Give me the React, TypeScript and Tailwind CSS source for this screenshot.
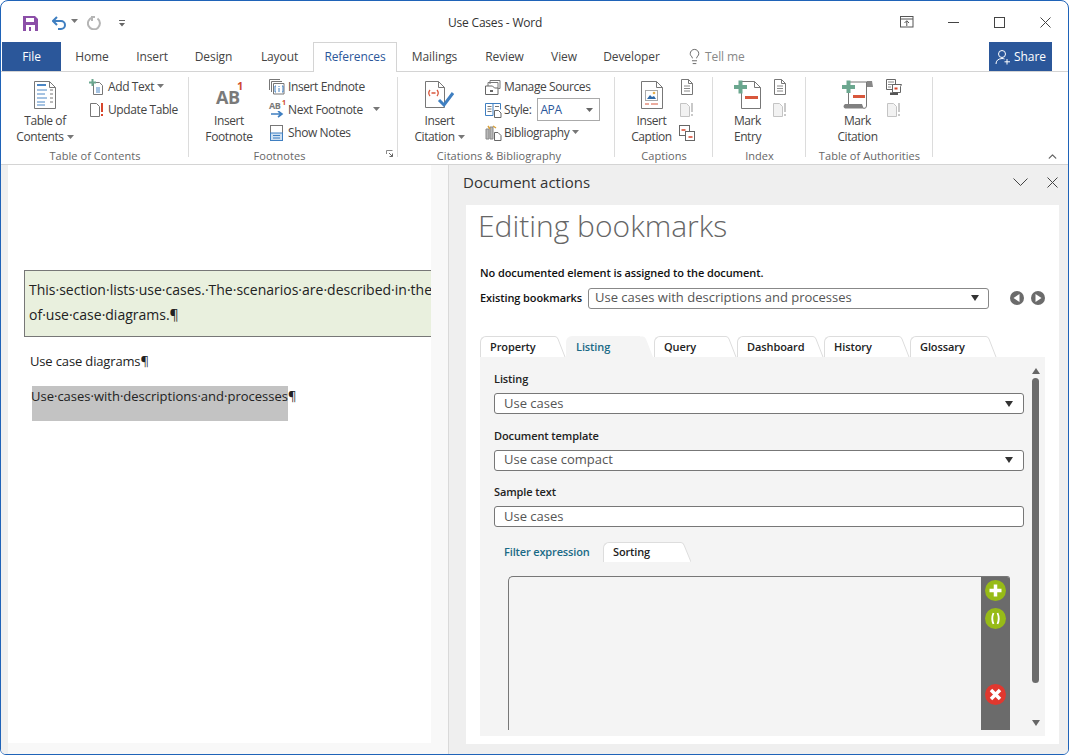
import React from 'react';
import { ChevronUp, Lightbulb } from 'lucide-react';

const Caret = () => (
  <svg width="7" height="4" viewBox="0 0 7 4" className="inline-block ml-[3px] mb-[2px]">
    <path d="M0 0h7L3.5 4z" fill="#777" />
  </svg>
);

const tabs = [
  { label: 'Home', w: 'w-[62px]' },
  { label: 'Insert', w: 'w-[58px]' },
  { label: 'Design', w: 'w-[65px]' },
  { label: 'Layout', w: 'w-[67px]' },
];
const tabsAfter = [
  { label: 'Mailings', w: 'w-[75px]' },
  { label: 'Review', w: 'w-[65px]' },
  { label: 'View', w: 'w-[54px]' },
  { label: 'Developer', w: 'w-[81px]' },
];

// Document with a folded corner, shared by most ribbon icons
const DocIcon = ({ size = 16, color = '#777', children }: { size?: number; color?: string; children?: React.ReactNode }) => (
  <svg width={size} height={size} viewBox="0 0 16 16" fill="none">
    <path d="M2.5 .5h7l4 4v11h-11z" fill="#fff" stroke={color} />
    <path d="M9.5 .5v4h4" stroke={color} />
    {children}
  </svg>
);

const Lines = () => (
  <g stroke="#888">
    <path d="M5 7h6M5 9.500h6M5 12h6" />
  </g>
);

const DisabledMark = () => (
  <svg width="16" height="16" viewBox="0 0 16 16" fill="none">
    <path d="M1.500 1.500h6l3 3v10h-9z" fill="#f2f2f2" stroke="#c4c4c4" />
    <path d="M13 1v9M13 12v2" stroke="#c9c9c9" strokeWidth="2" />
  </svg>
);

const TocIcon = () => (
  <svg width="24" height="30" viewBox="0 0 24 30" fill="none">
    <path d="M1.500 1.500h15l6 6v21h-21z" fill="#fff" stroke="#777" />
    <path d="M16.500 1.500v6h6" stroke="#777" />
    <path d="M4 5h9" stroke="#4a86c5" strokeWidth="2" />
    <path d="M4 10h10M4 14h8M4 18h10M4 22h8M4 25h8" stroke="#4a86c5" />
    <path d="M17 10h3M17 14h3M17 18h3M17 22h3" stroke="#777" />
  </svg>
);

const FootnoteIcon = () => (
  <div className="relative ml-[8px] h-[32px] w-[36px] font-['Open_Sans',sans-serif] font-bold">
    <span className="absolute left-[1px] top-[7px] text-[18px] leading-[22px] tracking-[-0.5px] text-[#7a7a7a]">AB</span>
    <span className="absolute left-[22px] top-0 text-[11px] leading-[14px] text-[#d0492f]">1</span>
  </div>
);

const CitationIcon = () => (
  <svg width="32" height="30" viewBox="0 0 32 30" fill="none" className="ml-[1px]">
    <path d="M1.500 1.500h13l6 6v20h-19z" fill="#fff" stroke="#777" />
    <path d="M14.500 1.500v6h6" stroke="#777" />
    <path d="M6 10q-2.500 3 0 6M13 10q2.500 3 0 6" stroke="#d8573c" strokeWidth="1.300" />
    <path d="M7.500 13h4" stroke="#d8573c" strokeWidth="1.500" />
    <path d="M15 20l5 5 9-12" stroke="#3f7fc1" strokeWidth="3" />
  </svg>
);

const CaptionIcon = () => (
  <svg width="24" height="30" viewBox="0 0 24 30" fill="none">
    <path d="M1.500 1.500h15l6 6v21h-21z" fill="#fff" stroke="#777" />
    <path d="M16.500 1.500v6h6" stroke="#777" />
    <rect x="5.500" y="10.500" width="12" height="10" fill="#fff" stroke="#aaa" />
    <path d="M7 19l3-4 2 2 2-1 2 3z" fill="#2f6aa8" />
    <circle cx="14" cy="13" r="1.300" fill="#e8b04a" />
    <path d="M5 24h4M11 24h7" stroke="#d8573c" />
  </svg>
);

const MarkEntryIcon = () => (
  <svg width="28" height="30" viewBox="0 0 28 30" fill="none">
    <path d="M7.500 1.500h13l6 6v21h-19z" fill="#fff" stroke="#777" />
    <path d="M20.500 1.500v6h6" stroke="#777" />
    <path d="M4.500 .5h4v4.500h4.500v4h-4.500v4.500h-4v-4.500H0v-4h4.500z" fill="#6ba78f" />
    <path d="M11 17.500h13" stroke="#d8573c" strokeWidth="3" />
  </svg>
);

const MarkCitationIcon = () => (
  <svg width="32" height="30" viewBox="0 0 32 30" fill="none">
    <path d="M6.500 26V2h22v4" fill="#fff" stroke="#777" />
    <path d="M24.500 2v24q0 2.500-3 2.500" fill="none" stroke="#777" />
    <path d="M25 1h5l1 6h-6z" fill="#888" />
    <path d="M3 24h17q.5 2 2 4.500H3q-3-2 0-4.500z" fill="#808080" />
    <path d="M11 16.500h12" stroke="#d8573c" strokeWidth="3" />
    <path d="M4.500 .5h4v4.500h4.500v4h-4.500v4h-4v-4H0v-4h4.500z" fill="#6ba78f" />
  </svg>
);

const AddTextIcon = () => (
  <svg width="16" height="16" viewBox="0 0 16 16" fill="none">
    <path d="M4.500 3.500h6l3 3v9h-9z" fill="#fff" stroke="#777" />
    <path d="M7 9h4M7 11h4M7 13h4" stroke="#4a86c5" />
    <path d="M2.500 0h2v2.500H7v2H4.500V7h-2V4.500H0v-2h2.500z" fill="#6ba78f" />
  </svg>
);

const UpdateIcon = () => (
  <svg width="16" height="16" viewBox="0 0 16 16" fill="none">
    <path d="M1.500 1.500h6l3 3v10h-9z" fill="#fff" stroke="#777" />
    <path d="M13 1v9M13 12v2" stroke="#d8452b" strokeWidth="2" />
  </svg>
);

const EndnoteIcon = () => (
  <svg width="16" height="16" viewBox="0 0 16 16" fill="none">
    <path d="M.5 11V.5H11M2.500 13V2.500H13M4.500 15V4.500H15V15z" stroke="#777" fill="#fff" />
    <path d="M7 7H6v6h1M13 7h1v6h-1" stroke="#3f7fc1" />
    <path d="M10 7v1M10 9v4" stroke="#3f7fc1" />
  </svg>
);

const NextFootnoteIcon = () => (
  <div className="relative h-[16px] w-[16px] font-['Open_Sans',sans-serif] font-bold">
    <span className="absolute left-0 top-[-2px] text-[9px] leading-[12px] text-[#7a7a7a]">AB</span>
    <span className="absolute left-[13px] top-[-4px] text-[7px] leading-[9px] text-[#d0492f]">1</span>
    <svg width="16" height="8" viewBox="0 0 16 8" className="absolute left-[2px] top-[9px]" fill="none">
      <path d="M0 3h10M7 0l4 3-4 3" stroke="#3f7fc1" strokeWidth="1.600" />
    </svg>
  </div>
);

const ShowNotesIcon = () => (
  <svg width="14" height="16" viewBox="0 0 14 16" fill="none" className="ml-[1px]">
    <rect x=".5" y=".5" width="12" height="15" fill="#fff" stroke="#777" />
    <rect x=".5" y="8" width="12" height="7.500" fill="#cfe0f1" stroke="#3f7fc1" />
    <path d="M3 10.500h7M3 13h7" stroke="#3f7fc1" />
  </svg>
);

const SourcesIcon = () => (
  <svg width="16" height="16" viewBox="0 0 16 16" fill="none">
    <path d="M5 5V1.500h10v8h-1.500M3 7V3.500h10V10" stroke="#777" />
    <path d="M.5 15.500V7h7l2 2h3.500v6.500z" fill="#fff" stroke="#666" />
    <path d="M5 12h3" stroke="#666" strokeWidth="2" />
  </svg>
);

const StyleIcon = () => (
  <svg width="17" height="16" viewBox="0 0 17 16" fill="none">
    <path d="M.5 1.500h7.500v12H.5zM8 1.500h7.500v6" stroke="#3f7fc1" fill="#fff" />
    <path d="M2.500 4.500h4M2.500 7h4M2.500 9.500h4M10 4.500h4" stroke="#777" />
    <path d="M9.500 8.500h4l2.500 2.500v4.500H9.500z" fill="#fff" stroke="#666" />
  </svg>
);

const BibIcon = () => (
  <svg width="17" height="16" viewBox="0 0 17 16" fill="none">
    <path d="M1 4h3v10H1zM5 2h3v12H5z" fill="#b9b9b9" stroke="#888" />
    <path d="M3 1l2 3M8 1l3 2" stroke="#d9a13b" strokeWidth="1.500" />
    <path d="M9.500 7.500h3.500l3 3v5H9.500z" fill="#fff" stroke="#666" />
  </svg>
);

const CrossRefIcon = () => (
  <svg width="16" height="16" viewBox="0 0 16 16" fill="none">
    <rect x=".5" y=".5" width="10" height="10" fill="#fff" stroke="#666" />
    <rect x="6.500" y="6.500" width="9" height="9" fill="#fff" stroke="#666" />
    <path d="M2.500 5h4" stroke="#d8452b" strokeWidth="1.600" />
    <path d="M9.500 12h4" stroke="#d8452b" strokeWidth="1.600" />
  </svg>
);

const AuthoritiesIcon = () => (
  <svg width="16" height="16" viewBox="0 0 16 16" fill="none">
    <path d="M.5.500h9v10h-9z" fill="#fff" stroke="#666" />
    <path d="M2 3h6M2 5.500h6M2 8h3" stroke="#888" />
    <path d="M6.500 5.500h9l-1 2v6h-8z" fill="#fff" stroke="#666" />
    <path d="M8.500 9.500h3" stroke="#d8452b" strokeWidth="2" />
    <path d="M4 13.500h8v2.500H4z" fill="#555" />
  </svg>
);

const RibbonSmall = ({ icon, label, caret }: { icon: React.ReactNode; label: string; caret?: boolean }) => (
  <div className="flex h-[23px] items-center whitespace-nowrap">
    <div className="flex w-[19px] shrink-0 items-center">{icon}</div>
    <span>{label}</span>
    {caret && <Caret />}
  </div>
);

const RibbonBig = ({ icon, lines, caret, w }: { icon: React.ReactNode; lines: string[]; caret?: boolean; w: string }) => (
  <div className={`flex flex-col items-center pt-[5px] ${w}`}>
    <div className="flex h-[35px] items-center">{icon}</div>
    <div className="mt-[1px] text-center leading-[16px] whitespace-nowrap">{lines[0]}</div>
    <div className="text-center leading-[16px] whitespace-nowrap">
      {lines[1]}
      {caret && <Caret />}
    </div>
  </div>
);

const RibbonGroup = ({ w, label, labelPad, children }: { w: string; label: string; labelPad?: string; children: React.ReactNode }) => (
  <div className={`relative flex h-[92px] shrink-0 flex-col ${w}`}>
    <div className="flex h-[77px]">{children}</div>
    <div className={`text-center text-[11px] leading-[14px] tracking-[0.05px] text-[#666] ${labelPad ?? ''}`}>{label}</div>
    <div className="absolute right-0 top-[5px] h-[80px] w-px bg-[#dcdcdc]" />
  </div>
);

const PanelTab = ({ label, active, w }: { label: string; active?: boolean; w: string }) => (
  <div className={`relative flex h-[21px] shrink-0 ${w}`}>
    <div
      className={`flex-1 rounded-tl-[6px] border-l border-t border-[#dddddd] pl-[9px] text-[11px] font-semibold leading-[20px] tracking-[-0.1px] ${
        active ? 'border-transparent bg-[#f4f4f4] text-[#1a6a86]' : 'bg-white text-[#222]'
      }`}
    >
      {label}
    </div>
    <svg width="14" height="21" viewBox="0 0 14 21" className="shrink-0" fill="none">
      <path d="M0 .5h3q2 0 3 2.500l7 18H0z" fill={active ? '#f4f4f4' : '#fff'} />
      {!active && <path d="M0 .5h3q2 0 3 2.500l7 18" stroke="#dddddd" />}
    </svg>
  </div>
);

const Field = ({ label, value, arrow }: { label: string; value: string; arrow?: boolean }) => (
  <div className="w-[530px]">
    <div className="h-[14px] text-[11px] font-semibold leading-[14px] tracking-[-0.1px] text-[#222]">{label}</div>
    <div className="mt-[7px] flex h-[21px] items-center justify-between rounded-[3px] border border-[#777] bg-white pl-[9px] pr-[10px] text-[13px] text-[#555]">
      <span>{value}</span>
      {arrow && (
        <svg width="8" height="6" viewBox="0 0 8 6">
          <path d="M0 0h8L4 6z" fill="#333" />
        </svg>
      )}
    </div>
  </div>
);

const RoundButton = ({ color, children }: { color: string; children: React.ReactNode }) => (
  <svg width="21" height="21" viewBox="0 0 21 21">
    <circle cx="10.500" cy="10.500" r="10.500" fill={color} />
    {children}
  </svg>
);

const NavArrow = ({ dir }: { dir: 'left' | 'right' }) => (
  <svg width="14" height="14" viewBox="0 0 14 14">
    <circle cx="7" cy="7" r="7" fill="#6b6b6b" />
    <path d={dir === 'left' ? 'M9.500 3v8L3.500 7z' : 'M4.500 3v8L10.500 7z'} fill="#fff" />
  </svg>
);

export default function App() {
  return (
    <div className="relative h-[755px] w-[1069px] overflow-hidden rounded-t-[8px] rounded-b-[6px] border border-[#1f63b8] bg-white font-['Open_Sans',sans-serif] text-[12px] text-[#444]">
      {/* Title bar */}
      <div className="relative flex h-[41px] items-center">
        <svg width="15" height="15" viewBox="0 0 15 15" className="ml-[22px] mt-[3px]">
          <path d="M0 0h12l3 3v12H0z" fill="#8c4fa8" />
          <rect x="3" y="2" width="8" height="4" fill="#fff" />
          <rect x="3" y="9" width="9" height="6" fill="#fff" />
          <rect x="6" y="11" width="2" height="4" fill="#8c4fa8" />
        </svg>
        <svg width="16" height="14" viewBox="0 0 16 14" className="ml-[14px] mt-[3px]" fill="none">
          <path d="M5 1L1 5l4 4" stroke="#3f7fc1" strokeWidth="2" />
          <path d="M1.500 5H9a4 4 0 0 1 0 8H6" stroke="#3f7fc1" strokeWidth="2" />
        </svg>
        <Caret />
        <svg width="14" height="14" viewBox="0 0 14 14" className="ml-[9px] mt-[3px]" fill="none">
          <path d="M8 1h-3v4" stroke="#b5b5b5" strokeWidth="2" />
          <path d="M5.500 1.500a6 6 0 1 0 5 1" stroke="#b5b5b5" strokeWidth="2" />
        </svg>
        <svg width="6" height="7" viewBox="0 0 6 7" className="ml-[18px] mt-[3px]">
          <path d="M0 0h6v1H0zM0 3h6L3 6.500z" fill="#666" />
        </svg>
        <div className="absolute left-[447px] top-[14px] text-[12px] leading-[16px] tracking-[-0.2px] text-[#333]">Use Cases - Word</div>
        <div className="absolute right-[17px] top-[15px] flex items-center">
          <svg width="14" height="12" viewBox="0 0 14 12" fill="none" className="mr-[34px]">
            <rect x=".5" y=".5" width="12.500" height="10.500" stroke="#555" />
            <path d="M.5 3h12.500" stroke="#555" />
            <path d="M6.800 10V5M4.500 7l2.300-2.300L9 7" stroke="#555" />
          </svg>
          <svg width="11" height="11" viewBox="0 0 11 11" fill="none" className="mr-[35px]">
            <path d="M0 5.500h11" stroke="#444" />
          </svg>
          <svg width="11" height="11" viewBox="0 0 11 11" fill="none" className="mr-[35px]">
            <rect x=".5" y=".5" width="10" height="10" stroke="#444" />
          </svg>
          <svg width="11" height="11" viewBox="0 0 11 11" fill="none">
            <path d="M.5.500l10 10M10.500.500l-10 10" stroke="#444" />
          </svg>
        </div>
      </div>

      {/* Tabs */}
      <div className="flex h-[30px] border-b border-[#d4d4d4] pl-px text-[12px] tracking-[-0.1px] text-[#444]">
        <div className="flex h-[29px] w-[59px] items-center justify-center bg-[#2b579a] text-white">File</div>
        {tabs.map((t) => (
          <div key={t.label} className={`flex h-[29px] items-center justify-center ${t.w}`}>
            {t.label}
          </div>
        ))}
        <div className="flex h-[30px] w-[84px] items-center justify-center border-x border-t border-[#d4d4d4] bg-white pb-px text-[#2b579a]">
          References
        </div>
        {tabsAfter.map((t) => (
          <div key={t.label} className={`flex h-[29px] items-center justify-center ${t.w}`}>
            {t.label}
          </div>
        ))}
        <div className="ml-[14px] flex h-[29px] items-center text-[#888]">
          <Lightbulb size={17} strokeWidth={1.100} className="mr-[2px] text-[#444]" />
          Tell me
        </div>
        <div className="ml-auto mr-[16px] flex h-[29px] w-[63px] items-center justify-center gap-[3px] bg-[#2b579a] text-white">
          <svg width="16" height="16" viewBox="0 0 16 16" fill="none">
            <circle cx="7" cy="5" r="3.500" stroke="#fff" />
            <path d="M1 15q0-5 6-5.500q1.500 0 2.500.5" stroke="#fff" />
            <path d="M12 10v5.500M9.500 12.800h5.500" stroke="#fff" />
          </svg>
          Share
        </div>
      </div>

      {/* Ribbon */}
      <div className="relative flex h-[93px] border-b border-[#d4d4d4] text-[12px] leading-[16px] tracking-[-0.4px]">
        <RibbonGroup w="w-[188px]" label="Table of Contents">
          <RibbonBig w="w-[88px]" icon={<TocIcon />} lines={['Table of', 'Contents']} caret />
          <div className="pt-[3px]">
            <RibbonSmall icon={<AddTextIcon />} label="Add Text" caret />
            <RibbonSmall icon={<UpdateIcon />} label="Update Table" />
          </div>
        </RibbonGroup>
        <RibbonGroup w="w-[209px]" label="Footnotes" labelPad="pr-[28px]">
          <RibbonBig w="w-[80px]" icon={<FootnoteIcon />} lines={['Insert', 'Footnote']} />
          <div className="pt-[3px]">
            <RibbonSmall icon={<EndnoteIcon />} label="Insert Endnote" />
            <div className="flex items-center">
              <RibbonSmall icon={<NextFootnoteIcon />} label="Next Footnote" />
              <span className="ml-[7px]"><Caret /></span>
            </div>
            <RibbonSmall icon={<ShowNotesIcon />} label="Show Notes" />
          </div>
          <svg width="7" height="7" viewBox="0 0 7 7" className="absolute right-[5px] top-[78px]" fill="none">
            <path d="M.5 4V.5H6.500" stroke="#888" />
            <path d="M3 3l3.500 3.500M3.500 6.500h3v-3" stroke="#666" />
          </svg>
        </RibbonGroup>
        <RibbonGroup w="w-[217px]" label="Citations & Bibliography" labelPad="pr-[15px]">
          <RibbonBig w="w-[83px] mr-[4px]" icon={<CitationIcon />} lines={['Insert', 'Citation']} caret />
          <div className="pt-[3px]">
            <RibbonSmall icon={<SourcesIcon />} label="Manage Sources" />
            <div className="flex items-center">
              <RibbonSmall icon={<StyleIcon />} label="Style:" />
              <div className="ml-[6px] flex h-[23px] w-[63px] items-center justify-between border border-[#aaa] pl-[2px] pr-[6px] text-[#2b579a]">
                APA
                <svg width="7" height="4" viewBox="0 0 7 4"><path d="M0 0h7L3.500 4z" fill="#666" /></svg>
              </div>
            </div>
            <RibbonSmall icon={<BibIcon />} label="Bibliography" caret />
          </div>
        </RibbonGroup>
        <RibbonGroup w="w-[98px]" label="Captions">
          <RibbonBig w="w-[55px] ml-[9px]" icon={<CaptionIcon />} lines={['Insert', 'Caption']} />
          <div className="pt-[3px]">
            <div className="flex h-[23px] items-center"><DocIcon><Lines /></DocIcon></div>
            <div className="flex h-[23px] items-center"><DisabledMark /></div>
            <div className="flex h-[23px] items-center"><CrossRefIcon /></div>
          </div>
        </RibbonGroup>
        <RibbonGroup w="w-[93px]" label="Index">
          <RibbonBig w="w-[49px] ml-[10px]" icon={<MarkEntryIcon />} lines={['Mark', 'Entry']} />
          <div className="pt-[3px]">
            <div className="flex h-[23px] items-center"><DocIcon><Lines /></DocIcon></div>
            <div className="flex h-[23px] items-center"><DisabledMark /></div>
          </div>
        </RibbonGroup>
        <RibbonGroup w="w-[127px]" label="Table of Authorities">
          <RibbonBig w="w-[57px] ml-[23px]" icon={<MarkCitationIcon />} lines={['Mark', 'Citation']} />
          <div className="pt-[3px]">
            <div className="flex h-[23px] items-center"><AuthoritiesIcon /></div>
            <div className="flex h-[23px] items-center"><DisabledMark /></div>
          </div>
        </RibbonGroup>
        <ChevronUp size={13} strokeWidth={2.500} className="absolute right-[9px] top-[78px] text-[#666]" />
      </div>

      {/* Body */}
      <div className="flex h-[589px]">
        {/* Document */}
        <div className="flex w-[448px] shrink-0 border-r border-[#d9d9d9] bg-[#f8f8f8]">
          <div className="w-[7px] shrink-0 bg-[#efefef]" />
          <div className="h-[578px] w-[423px] shrink-0 overflow-hidden bg-white pl-[16px] pt-[105px] font-['Open_Sans',sans-serif] text-[#222]">
            <div className="h-[67px] w-[450px] whitespace-nowrap border border-[#777] bg-[#e9f0de] pl-[4px] pt-[6px] text-[14px] leading-[25px]">
              <div>This·section·lists·use·cases.·The·scenarios·are·described·in·the</div>
              <div>of·use·case·diagrams.¶</div>
            </div>
            <div className="ml-[6px] mt-[14px] h-[20px] text-[13px] leading-[20px] tracking-[-0.15px]">Use case diagrams¶</div>
            <div className="ml-[8px] mt-[15px] flex h-[35px] items-start text-[13px] leading-[20px]">
              <div className="h-[35px] w-[256px] whitespace-nowrap bg-[#c3c3c3]">
                <span className="ml-[-1px]">Use·cases·with·descriptions·and·processes</span>
              </div>
              <span>¶</span>
            </div>
          </div>
        </div>

        {/* Document actions pane */}
        <div className="flex-1 bg-[#efefef] pl-[17px] pr-[9px]">
          <div className="flex h-[40px] items-center justify-between pb-[6px]">
            <span className="ml-[-3px] text-[15px] text-[#333]">Document actions</span>
            <div className="flex items-center gap-[19px] pr-[1px]">
              <svg width="15" height="8" viewBox="0 0 15 8" fill="none">
                <path d="M.5.500l7 7 7-7" stroke="#444" />
              </svg>
              <svg width="11" height="11" viewBox="0 0 11 11" fill="none">
                <path d="M.5.500l10 10M10.500.500l-10 10" stroke="#444" />
              </svg>
            </div>
          </div>
          <div className="h-[539px] w-[593px] bg-white pl-[14px] pr-[14px] pt-[3px]">
            <div className="ml-[-2px] text-[30px] font-light leading-[36px] text-[#666]">Editing bookmarks</div>
            <div className="mt-[22px] h-[14px] text-[11px] font-semibold leading-[14px] tracking-[-0.08px] text-[#111]">
              No documented element is assigned to the document.
            </div>
            <div className="mt-[8px] flex h-[20px] items-center">
              <span className="w-[108px] shrink-0 text-[11px] font-semibold tracking-[-0.1px] text-[#111]">Existing bookmarks</span>
              <div className="flex h-[21px] w-[401px] items-center justify-between rounded-[3px] border border-[#888] pl-[6px] pr-[9px] text-[13px] text-[#555]">
                <span>Use cases with descriptions and processes</span>
                <svg width="8" height="6" viewBox="0 0 8 6"><path d="M0 0h8L4 6z" fill="#333" /></svg>
              </div>
              <div className="ml-[21px] flex gap-[7px]">
                <NavArrow dir="left" />
                <NavArrow dir="right" />
              </div>
            </div>

            {/* Tabs */}
            <div className="mt-[28px] flex">
              <PanelTab w="w-[86px]" label="Property" />
              <PanelTab w="w-[88px]" label="Listing" active />
              <PanelTab w="w-[83px]" label="Query" />
              <PanelTab w="w-[87px]" label="Dashboard" />
              <PanelTab w="w-[86px]" label="History" />
              <PanelTab w="w-[87px]" label="Glossary" />
            </div>

            {/* Tab content */}
            <div className="relative h-[379px] w-[565px] overflow-hidden bg-[#f4f4f4] pl-[14px] pt-[15px]">
              <div className="flex flex-col gap-[14.5px]">
                <Field label="Listing" value="Use cases" arrow />
                <Field label="Document template" value="Use case compact" arrow />
                <Field label="Sample text" value="Use cases" />
              </div>

              <div className="ml-[10px] mt-[15px] flex h-[20px] items-end text-[11px] font-semibold tracking-[-0.15px]">
                <span className="w-[99px] self-center text-[#1a6a86]">Filter expression</span>
                <div className="flex h-[20px]">
                  <div className="w-[74px] rounded-tl-[6px] border-l border-t border-[#dddddd] bg-white pl-[9px] leading-[18px] text-[#222]">Sorting</div>
                  <svg width="14" height="20" viewBox="0 0 14 20" fill="none">
                    <path d="M0 .5h4q2 0 3 2.500l7 17H0z" fill="#fff" />
                    <path d="M0 .5h4q2 0 3 2.500l7 17" stroke="#dddddd" />
                  </svg>
                </div>
              </div>

              <div className="ml-[14px] mt-[14px] flex h-[154px] w-[502px] overflow-hidden rounded-tl-[5px] rounded-tr-[3px] border-l border-t border-[#777]">
                <div className="flex-1" />
                <div className="flex w-[29px] flex-col items-center bg-[#6b6b6b] pt-[3px]">
                  <RoundButton color="#97bb17">
                    <path d="M10.500 4.500v12M4.500 10.500h12" stroke="#fff" strokeWidth="3.500" />
                  </RoundButton>
                  <div className="mt-[7px]">
                    <RoundButton color="#97bb17">
                      <path d="M8.500 5q-2.500 5.500 0 11M12.500 5q2.500 5.500 0 11" stroke="#fff" strokeWidth="1.800" fill="none" />
                    </RoundButton>
                  </div>
                  <div className="mt-[55px]">
                    <RoundButton color="#e0382f">
                      <path d="M6 6l9 9M15 6l-9 9" stroke="#fff" strokeWidth="3.500" />
                    </RoundButton>
                  </div>
                </div>
              </div>

              {/* Scrollbar */}
              <svg width="8" height="6" viewBox="0 0 8 6" className="absolute left-[552px] top-[11px]">
                <path d="M0 6h8L4 0z" fill="#666" />
              </svg>
              <div className="absolute left-[552px] top-[21px] h-[305px] w-[7px] rounded-full bg-[#6b6b6b]" />
              <svg width="8" height="6" viewBox="0 0 8 6" className="absolute left-[552px] top-[363px]">
                <path d="M0 0h8L4 6z" fill="#666" />
              </svg>
            </div>
          </div>
        </div>
      </div>
    </div>
  );
}
